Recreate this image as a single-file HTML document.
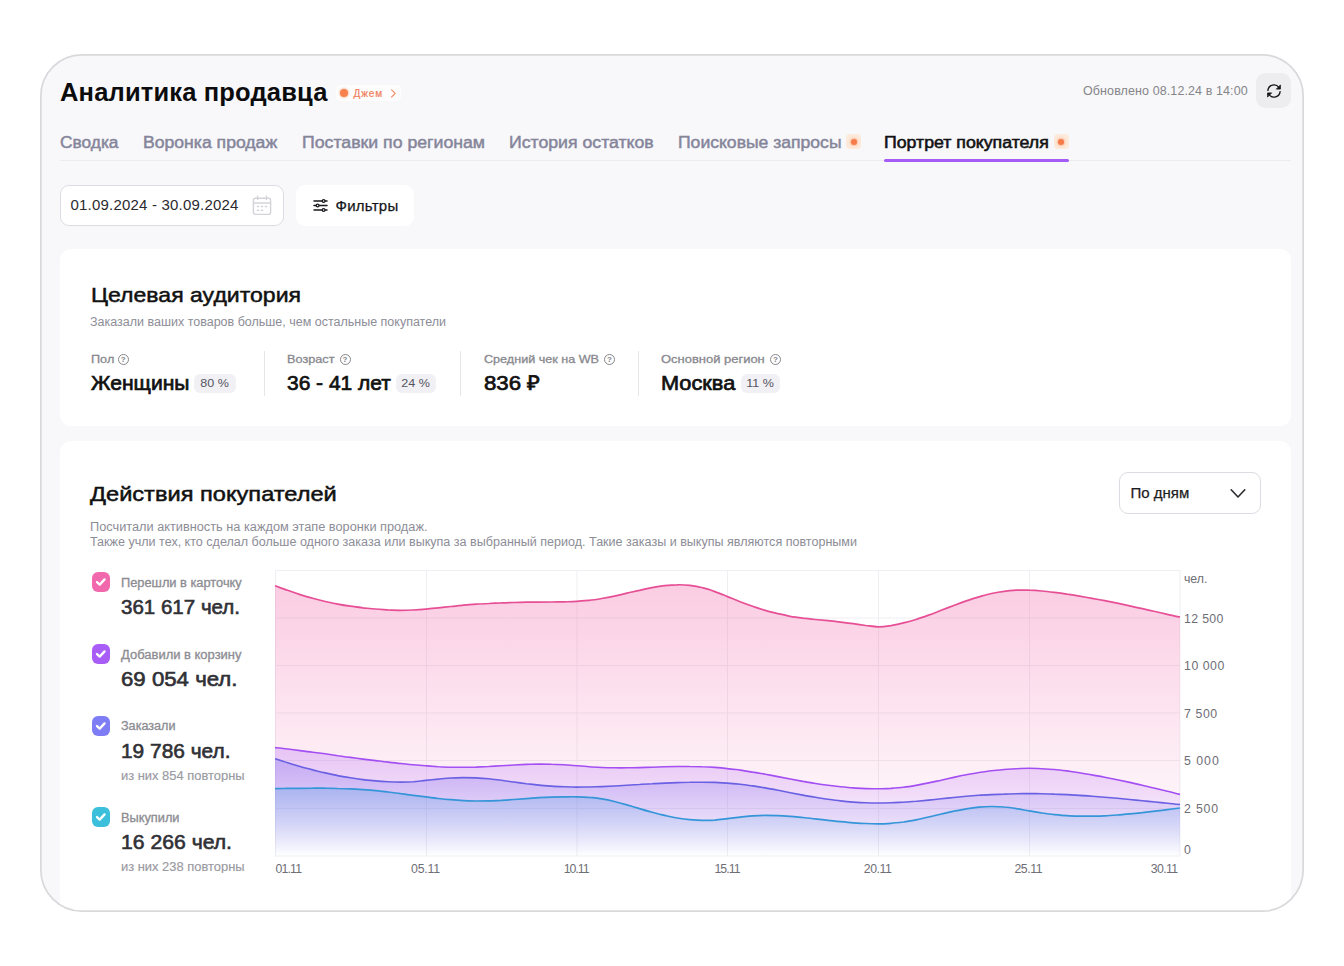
<!DOCTYPE html>
<html lang="ru">
<head>
<meta charset="utf-8">
<title>Аналитика продавца</title>
<style>
*{box-sizing:border-box;margin:0;padding:0}
html,body{width:1344px;height:966px;background:#fff;overflow:hidden}
body{font-family:"Liberation Sans",sans-serif;color:#111;position:relative}
.abs{position:absolute;white-space:nowrap;line-height:1;transform-origin:0 0}
#frame{position:absolute;left:40px;top:54px;width:1264px;height:858px;border-radius:42px;background:#f8f8fa;overflow:hidden}
/* children of #in use page coordinates */
#in{position:absolute;left:-40px;top:-54px;width:1344px;height:966px}
.title{left:60px;top:79.5px;font-size:25.5px;font-weight:700;color:#0c0c0e;letter-spacing:0.17px}
.tab{top:134.6px;font-size:16px;transform-origin:0 0;color:#85859a;-webkit-text-stroke:0.45px #85859a}
.tab.act{color:#121214;-webkit-text-stroke:0.55px #121214}
.card{position:absolute;left:59.5px;width:1231px;background:#fff;border-radius:11px}
.h2{font-size:21px;color:#111;-webkit-text-stroke:0.5px #111}
.sub{font-size:12px;color:#8d8d97}
.lbl{font-size:11.5px;transform-origin:0 0;color:#88888e;-webkit-text-stroke:0.3px #88888e}
.val{font-size:20.5px;color:#111;-webkit-text-stroke:0.7px #111}
.badge{position:absolute;height:19px;border-radius:6px;background:#f1f1f5;color:#55555f;font-size:11px;line-height:19px;text-align:center;white-space:nowrap}
.vdiv{position:absolute;width:1px;top:351px;height:45px;background:#e6e6ea}
.q{position:absolute;width:11px;height:11px;border:1px solid #86868c;border-radius:50%;color:#7e7e84;font-size:8px;font-weight:700;line-height:9px;text-align:center}
.cb{position:absolute;left:92px;width:18.4px;height:19.6px;border-radius:6px}
.cb svg{position:absolute;left:0;top:0}
.mlbl{left:120.5px;font-size:12px;color:#8c8c92;-webkit-text-stroke:0.3px #8c8c92}
.mval{left:120.5px;font-size:20px;color:#303035;-webkit-text-stroke:0.6px #303035}
.mrep{left:120.5px;font-size:12px;transform-origin:0 0;color:#9a9aa2;width:115.2px;overflow:hidden;-webkit-text-stroke:0.15px #9a9aa2}
</style>
</head>
<body>
<div id="frame"><div id="in">

<!-- header -->
<div class="abs title" id="t_title">Аналитика продавца</div>
<div class="abs" id="jam" style="left:336px;top:85px;width:65px;height:16px;border-radius:5px;background:#fdfdfd"></div>
<div class="abs" style="left:339.5px;top:89px;width:8px;height:8px;border-radius:50%;background:#f8824f;box-shadow:0 0 2px 1px rgba(250,150,100,.45)"></div>
<div class="abs" id="t_jam" style="left:353.5px;top:89px;font-size:10px;letter-spacing:0.9px;color:#f0805c;-webkit-text-stroke:0.2px #f0805c">Джем</div>
<svg class="abs" style="left:389px;top:88px" width="9" height="11" viewBox="0 0 9 11"><path d="M2.6 1.8 L6.2 5.4 L2.6 9" fill="none" stroke="#f58a5e" stroke-width="1.1" stroke-linecap="round" stroke-linejoin="round"/></svg>

<div class="abs" id="t_upd" style="left:1083px;top:85px;font-size:12.5px;letter-spacing:0.1px;color:#858589">Обновлено 08.12.24 в 14:00</div>
<div class="abs" style="left:1255.7px;top:72.8px;width:35.5px;height:35.5px;border-radius:9.5px;background:#ededef"></div>
<svg class="abs" style="left:1264.7px;top:81.7px" width="18" height="18" viewBox="0 0 18 18" fill="none" stroke="#141416" stroke-width="1.35" stroke-linecap="round" stroke-linejoin="round">
<path d="M2.9 8.4 A6.15 6.15 0 0 1 13.9 5.3"/><path d="M15.4 3.3 V7.1 H11.7 Z" fill="#141416" stroke-width="0.8"/>
<path d="M15.1 9.6 A6.15 6.15 0 0 1 4.1 12.7"/><path d="M2.6 14.7 V10.9 H6.3 Z" fill="#141416" stroke-width="0.8"/>
</svg>

<!-- tabs -->
<div class="abs tab" id="t_tab1" style="left:60px;transform:scaleX(1.0831)">Сводка</div>
<div class="abs tab" id="t_tab2" style="left:143px;transform:scaleX(1.1003)">Воронка продаж</div>
<div class="abs tab" id="t_tab3" style="left:302px;transform:scaleX(1.1054)">Поставки по регионам</div>
<div class="abs tab" id="t_tab4" style="left:509px;transform:scaleX(1.1050)">История остатков</div>
<div class="abs tab" id="t_tab5" style="left:677.5px;transform:scaleX(1.0977)">Поисковые запросы</div>
<div class="abs" style="left:846px;top:134px;width:15px;height:15px;border-radius:4px;background:#fdeadb"></div>
<div class="abs" style="left:850.5px;top:138.5px;width:6px;height:6px;border-radius:50%;background:#f8794a;box-shadow:0 0 2px 1px rgba(250,150,100,.5)"></div>
<div class="abs tab act" id="t_tab6" style="left:884px;transform:scaleX(1.1073)">Портрет покупателя</div>
<div class="abs" style="left:1053.5px;top:134px;width:15px;height:15px;border-radius:4px;background:#fdeadb"></div>
<div class="abs" style="left:1058px;top:138.5px;width:6px;height:6px;border-radius:50%;background:#f8794a;box-shadow:0 0 2px 1px rgba(250,150,100,.5)"></div>
<div class="abs" style="left:60px;top:160px;width:1231px;height:1px;background:#ececf0"></div>
<div class="abs" style="left:884px;top:159.3px;width:185px;height:2.6px;border-radius:2px;background:#a55cf6"></div>

<!-- controls -->
<div class="abs" style="left:60px;top:185px;width:224px;height:40.5px;border:1px solid #dcdce2;border-radius:9px;background:#fff"></div>
<div class="abs" id="t_date" style="left:70.5px;top:197px;font-size:15px;letter-spacing:0.2px;color:#2a2a2e">01.09.2024 - 30.09.2024</div>
<svg class="abs" style="left:252px;top:195px" width="20" height="21" viewBox="0 0 20 21" fill="none" stroke="#d3d3da" stroke-width="1.4" stroke-linecap="round" stroke-linejoin="round">
<rect x="1.4" y="3.2" width="17.2" height="16.2" rx="2"/><path d="M1.4 8 H18.6"/><path d="M5.6 1.2 V4.6 M14.4 1.2 V4.6"/>
<path d="M5.4 11.6h1.2M9.4 11.6h1.2M13.4 11.6h1.2M5.4 15.2h1.2M9.4 15.2h1.2" stroke-width="1.5"/>
</svg>
<div class="abs" style="left:296px;top:185px;width:118px;height:40.5px;border-radius:9px;background:#fff"></div>
<svg class="abs" style="left:312px;top:197px" width="17" height="17" viewBox="0 0 17 17" fill="none" stroke="#1a1a1e" stroke-width="1.5" stroke-linecap="round">
<path d="M2 4 H15 M2 8.5 H15 M2 13 H15"/>
<circle cx="11.6" cy="4" r="1.4" fill="#fff" stroke-width="1.3"/><circle cx="5.6" cy="8.5" r="1.4" fill="#fff" stroke-width="1.3"/><circle cx="11.6" cy="13" r="1.4" fill="#fff" stroke-width="1.3"/>
</svg>
<div class="abs" id="t_filt" style="left:335.5px;top:198px;font-size:15px;letter-spacing:0.25px;color:#151518;-webkit-text-stroke:0.25px #151518">Фильтры</div>

<!-- cards -->
<div class="card" id="card1" style="top:248.8px;height:177px"></div>
<div class="abs h2" id="t_h1" style="left:90.5px;top:284.25px;transform:scaleX(1.0976)">Целевая аудитория</div>
<div class="abs sub" id="t_s1" style="left:90px;top:315.5px;transform:scaleX(1.0415)">Заказали ваших товаров больше, чем остальные покупатели</div>

<div class="abs lbl" id="t_l1" style="left:90.5px;top:353.6px;transform:scaleX(1.1026)">Пол</div>
<div class="abs lbl" id="t_l2" style="left:287px;top:353.6px;transform:scaleX(1.1041)">Возраст</div>
<div class="abs lbl" id="t_l3" style="left:483.5px;top:353.6px;transform:scaleX(1.0950)">Средний чек на WB</div>
<div class="abs lbl" id="t_l4" style="left:661px;top:353.6px;transform:scaleX(1.1268)">Основной регион</div>
<div class="q" style="left:117.6px;top:353.8px">?</div>
<div class="q" style="left:339.5px;top:353.8px">?</div>
<div class="q" style="left:604px;top:353.8px">?</div>
<div class="q" style="left:770px;top:353.8px">?</div>

<div class="abs val" id="t_v1" style="left:90.5px;top:373px;transform:scaleX(1.0284)">Женщины</div>
<div class="abs val" id="t_v2" style="left:287px;top:373px;transform:scaleX(1.0213)">36 - 41 лет</div>
<div class="abs val" id="t_v3" style="left:483.5px;top:373px;transform:scaleX(1.0836)">836 ₽</div>
<div class="abs val" id="t_v4" style="left:661px;top:373px;transform:scaleX(1.0607)">Москва</div>
<div class="badge" style="left:193.5px;top:373.5px;width:42.5px"><span id="t_b1" style="display:inline-block;transform:scaleX(1.14)">80 %</span></div>
<div class="badge" style="left:396px;top:373.5px;width:40px"><span id="t_b2" style="display:inline-block;transform:scaleX(1.14)">24 %</span></div>
<div class="badge" style="left:741px;top:373.5px;width:38.5px"><span id="t_b3" style="display:inline-block;transform:scaleX(1.14)">11 %</span></div>
<div class="vdiv" style="left:263.5px"></div>
<div class="vdiv" style="left:460px"></div>
<div class="vdiv" style="left:637.5px"></div>

<div class="card" id="card2" style="top:441.4px;height:520px"></div>
<div class="abs h2" id="t_h2" style="left:90px;top:482.5px;transform:scaleX(1.1245)">Действия покупателей</div>
<div class="abs sub" id="t_s2" style="left:90px;top:520.6px;transform:scaleX(1.0629)">Посчитали активность на каждом этапе воронки продаж.</div>
<div class="abs sub" id="t_s3" style="left:90px;top:535.6px;transform:scaleX(1.0458)">Также учли тех, кто сделал больше одного заказа или выкупа за выбранный период. Такие заказы и выкупы являются повторными</div>

<div class="abs" style="left:1118.5px;top:472px;width:142px;height:42px;border:1px solid #dcdce2;border-radius:9px;background:#fff"></div>
<div class="abs" id="t_dd" style="left:1130.5px;top:484.5px;font-size:15px;color:#1d1d21;-webkit-text-stroke:0.25px #1d1d21">По дням</div>
<svg class="abs" style="left:1229px;top:487px" width="18" height="13" viewBox="0 0 18 13"><path d="M2.2 2.8 L9 10 L15.8 2.8" fill="none" stroke="#2a2a2e" stroke-width="1.6" stroke-linecap="round" stroke-linejoin="round"/></svg>

<!-- metrics -->
<div class="cb" style="top:572px;background:#f168ad"><svg width="18.4" height="19.2" viewBox="0 0 18.4 19.2"><path d="M5 10.1 L7.7 12.6 L12.6 7.4" fill="none" stroke="#fff" stroke-width="2.3" stroke-linecap="round" stroke-linejoin="round"/></svg></div>
<div class="abs mlbl" id="t_m1" style="top:576.5px;transform:scaleX(1.0683)">Перешли в карточку</div>
<div class="abs mval" id="t_n1" style="top:596.6px;transform:scaleX(1.0261)">361 617 чел.</div>

<div class="cb" style="top:644px;background:#a85df6"><svg width="18.4" height="19.2" viewBox="0 0 18.4 19.2"><path d="M5 10.1 L7.7 12.6 L12.6 7.4" fill="none" stroke="#fff" stroke-width="2.3" stroke-linecap="round" stroke-linejoin="round"/></svg></div>
<div class="abs mlbl" id="t_m2" style="top:648.5px;transform:scaleX(1.0810)">Добавили в корзину</div>
<div class="abs mval" id="t_n2" style="top:668.6px;transform:scaleX(1.1112)">69 054 чел.</div>

<div class="cb" style="top:716px;background:#7f7df6"><svg width="18.4" height="19.2" viewBox="0 0 18.4 19.2"><path d="M5 10.1 L7.7 12.6 L12.6 7.4" fill="none" stroke="#fff" stroke-width="2.3" stroke-linecap="round" stroke-linejoin="round"/></svg></div>
<div class="abs mlbl" id="t_m3" style="top:720.3px;transform:scaleX(1.0509)">Заказали</div>
<div class="abs mval" id="t_n3" style="top:740.5px;transform:scaleX(1.0444)">19 786 чел.</div>
<div class="abs mrep" id="t_r3" style="top:769.8px;transform:scaleX(1.0761)">из них 854 повторных</div>

<div class="cb" style="top:807px;background:#3bbfdb"><svg width="18.4" height="19.2" viewBox="0 0 18.4 19.2"><path d="M5 10.1 L7.7 12.6 L12.6 7.4" fill="none" stroke="#fff" stroke-width="2.3" stroke-linecap="round" stroke-linejoin="round"/></svg></div>
<div class="abs mlbl" id="t_m4" style="top:811.5px;transform:scaleX(1.0652)">Выкупили</div>
<div class="abs mval" id="t_n4" style="top:831.5px;transform:scaleX(1.0588)">16 266 чел.</div>
<div class="abs mrep" id="t_r4" style="top:860.8px;transform:scaleX(1.0761)">из них 238 повторных</div>

<!-- chart -->
<svg class="abs" id="chart" style="left:270px;top:560px" width="980" height="330" viewBox="270 560 980 330"><defs>
<linearGradient id="gp" gradientUnits="userSpaceOnUse" x1="0" y1="584" x2="0" y2="856.3"><stop offset="0" stop-color="#f0569f" stop-opacity="0.3"/><stop offset="1" stop-color="#f0569f" stop-opacity="0"/></linearGradient>
<linearGradient id="gu" gradientUnits="userSpaceOnUse" x1="0" y1="747" x2="0" y2="856.3"><stop offset="0" stop-color="#a855f7" stop-opacity="0.26"/><stop offset="1" stop-color="#a855f7" stop-opacity="0"/></linearGradient>
<linearGradient id="gi" gradientUnits="userSpaceOnUse" x1="0" y1="758" x2="0" y2="856.3"><stop offset="0" stop-color="#6f62ee" stop-opacity="0.3"/><stop offset="1" stop-color="#6f62ee" stop-opacity="0"/></linearGradient>
<linearGradient id="gb" gradientUnits="userSpaceOnUse" x1="0" y1="788" x2="0" y2="856.3"><stop offset="0" stop-color="#4698e4" stop-opacity="0.29"/><stop offset="1" stop-color="#4698e4" stop-opacity="0"/></linearGradient>
</defs>
<path d="M275.5 570.5V856.3M426.5 570.5V856.3M577 570.5V856.3M727.5 570.5V856.3M878.5 570.5V856.3M1029.5 570.5V856.3M1180 570.5V856.3M275 570.5H1180M275 618H1180M275 665.5H1180M275 713H1180M275 760.5H1180M275 808.5H1180M275 856H1180" stroke="#efeff3" stroke-width="1" fill="none"/>
<path d="M275.0 585.8C277.1 586.5 283.4 588.9 287.6 590.3C291.8 591.8 295.9 593.2 300.1 594.6C304.3 595.9 308.5 597.2 312.7 598.3C316.9 599.5 321.1 600.6 325.3 601.5C329.5 602.5 333.7 603.3 337.8 604.1C342.0 604.9 346.2 605.6 350.4 606.2C354.6 606.8 358.8 607.3 363.0 607.8C367.2 608.2 371.4 608.7 375.6 609.0C379.7 609.4 383.9 609.6 388.1 609.9C392.3 610.1 396.5 610.3 400.7 610.3C404.9 610.3 409.1 610.2 413.3 610.0C417.5 609.8 421.6 609.5 425.8 609.1C430.0 608.7 434.2 608.2 438.4 607.8C442.6 607.4 446.8 606.9 451.0 606.5C455.2 606.0 459.4 605.6 463.5 605.2C467.7 604.9 471.9 604.5 476.1 604.2C480.3 603.9 484.5 603.7 488.7 603.5C492.9 603.2 497.1 603.0 501.3 602.9C505.4 602.7 509.6 602.6 513.8 602.5C518.0 602.4 522.2 602.3 526.4 602.2C530.6 602.2 534.8 602.1 539.0 602.1C543.1 602.0 547.3 602.0 551.5 602.0C555.7 601.9 559.9 601.9 564.1 601.8C568.3 601.7 572.5 601.7 576.7 601.4C580.9 601.2 585.0 600.8 589.2 600.4C593.4 599.9 597.6 599.2 601.8 598.5C606.0 597.8 610.2 597.0 614.4 596.1C618.6 595.2 622.8 594.2 626.9 593.2C631.1 592.3 635.3 591.2 639.5 590.3C643.7 589.3 647.9 588.4 652.1 587.6C656.3 586.9 660.5 586.2 664.7 585.7C668.8 585.2 673.0 584.8 677.2 584.8C681.4 584.7 685.6 584.9 689.8 585.4C694.0 585.9 698.2 586.6 702.4 587.7C706.6 588.7 710.7 590.1 714.9 591.6C719.1 593.1 723.3 594.9 727.5 596.6C731.7 598.3 735.9 600.1 740.1 601.7C744.3 603.3 748.4 604.8 752.6 606.3C756.8 607.7 761.0 609.2 765.2 610.4C769.4 611.7 773.6 612.7 777.8 613.7C782.0 614.6 786.2 615.5 790.3 616.3C794.5 617.0 798.7 617.6 802.9 618.2C807.1 618.7 811.3 619.1 815.5 619.5C819.7 619.9 823.9 620.3 828.1 620.7C832.2 621.1 836.4 621.6 840.6 622.1C844.8 622.6 849.0 623.1 853.2 623.7C857.4 624.3 861.6 624.9 865.8 625.5C870.0 626.0 874.1 626.8 878.3 626.8C882.5 626.9 886.7 626.2 890.9 625.6C895.1 624.9 899.3 624.0 903.5 622.9C907.7 621.9 911.9 620.8 916.0 619.5C920.2 618.1 924.4 616.6 928.6 615.1C932.8 613.6 937.0 611.9 941.2 610.3C945.4 608.7 949.6 607.1 953.8 605.5C957.9 603.9 962.1 602.3 966.3 600.9C970.5 599.5 974.7 598.1 978.9 596.9C983.1 595.7 987.3 594.4 991.5 593.5C995.6 592.6 999.8 591.8 1004.0 591.3C1008.2 590.7 1012.4 590.4 1016.6 590.2C1020.8 590.0 1025.0 590.0 1029.2 590.2C1033.4 590.3 1037.5 590.6 1041.7 591.0C1045.9 591.4 1050.1 591.9 1054.3 592.4C1058.5 592.9 1062.7 593.5 1066.9 594.2C1071.1 594.8 1075.3 595.5 1079.4 596.2C1083.6 596.9 1087.8 597.6 1092.0 598.3C1096.2 599.1 1100.4 599.9 1104.6 600.7C1108.8 601.5 1113.0 602.4 1117.2 603.2C1121.3 604.1 1125.5 605.0 1129.7 605.9C1133.9 606.8 1138.1 607.8 1142.3 608.7C1146.5 609.6 1150.7 610.6 1154.9 611.5C1159.1 612.5 1163.2 613.4 1167.4 614.3C1171.6 615.2 1177.9 616.6 1180.0 617.0L1180 856.3L275 856.3Z" fill="url(#gp)"/>
<path d="M275.0 585.8C277.1 586.5 283.4 588.9 287.6 590.3C291.8 591.8 295.9 593.2 300.1 594.6C304.3 595.9 308.5 597.2 312.7 598.3C316.9 599.5 321.1 600.6 325.3 601.5C329.5 602.5 333.7 603.3 337.8 604.1C342.0 604.9 346.2 605.6 350.4 606.2C354.6 606.8 358.8 607.3 363.0 607.8C367.2 608.2 371.4 608.7 375.6 609.0C379.7 609.4 383.9 609.6 388.1 609.9C392.3 610.1 396.5 610.3 400.7 610.3C404.9 610.3 409.1 610.2 413.3 610.0C417.5 609.8 421.6 609.5 425.8 609.1C430.0 608.7 434.2 608.2 438.4 607.8C442.6 607.4 446.8 606.9 451.0 606.5C455.2 606.0 459.4 605.6 463.5 605.2C467.7 604.9 471.9 604.5 476.1 604.2C480.3 603.9 484.5 603.7 488.7 603.5C492.9 603.2 497.1 603.0 501.3 602.9C505.4 602.7 509.6 602.6 513.8 602.5C518.0 602.4 522.2 602.3 526.4 602.2C530.6 602.2 534.8 602.1 539.0 602.1C543.1 602.0 547.3 602.0 551.5 602.0C555.7 601.9 559.9 601.9 564.1 601.8C568.3 601.7 572.5 601.7 576.7 601.4C580.9 601.2 585.0 600.8 589.2 600.4C593.4 599.9 597.6 599.2 601.8 598.5C606.0 597.8 610.2 597.0 614.4 596.1C618.6 595.2 622.8 594.2 626.9 593.2C631.1 592.3 635.3 591.2 639.5 590.3C643.7 589.3 647.9 588.4 652.1 587.6C656.3 586.9 660.5 586.2 664.7 585.7C668.8 585.2 673.0 584.8 677.2 584.8C681.4 584.7 685.6 584.9 689.8 585.4C694.0 585.9 698.2 586.6 702.4 587.7C706.6 588.7 710.7 590.1 714.9 591.6C719.1 593.1 723.3 594.9 727.5 596.6C731.7 598.3 735.9 600.1 740.1 601.7C744.3 603.3 748.4 604.8 752.6 606.3C756.8 607.7 761.0 609.2 765.2 610.4C769.4 611.7 773.6 612.7 777.8 613.7C782.0 614.6 786.2 615.5 790.3 616.3C794.5 617.0 798.7 617.6 802.9 618.2C807.1 618.7 811.3 619.1 815.5 619.5C819.7 619.9 823.9 620.3 828.1 620.7C832.2 621.1 836.4 621.6 840.6 622.1C844.8 622.6 849.0 623.1 853.2 623.7C857.4 624.3 861.6 624.9 865.8 625.5C870.0 626.0 874.1 626.8 878.3 626.8C882.5 626.9 886.7 626.2 890.9 625.6C895.1 624.9 899.3 624.0 903.5 622.9C907.7 621.9 911.9 620.8 916.0 619.5C920.2 618.1 924.4 616.6 928.6 615.1C932.8 613.6 937.0 611.9 941.2 610.3C945.4 608.7 949.6 607.1 953.8 605.5C957.9 603.9 962.1 602.3 966.3 600.9C970.5 599.5 974.7 598.1 978.9 596.9C983.1 595.7 987.3 594.4 991.5 593.5C995.6 592.6 999.8 591.8 1004.0 591.3C1008.2 590.7 1012.4 590.4 1016.6 590.2C1020.8 590.0 1025.0 590.0 1029.2 590.2C1033.4 590.3 1037.5 590.6 1041.7 591.0C1045.9 591.4 1050.1 591.9 1054.3 592.4C1058.5 592.9 1062.7 593.5 1066.9 594.2C1071.1 594.8 1075.3 595.5 1079.4 596.2C1083.6 596.9 1087.8 597.6 1092.0 598.3C1096.2 599.1 1100.4 599.9 1104.6 600.7C1108.8 601.5 1113.0 602.4 1117.2 603.2C1121.3 604.1 1125.5 605.0 1129.7 605.9C1133.9 606.8 1138.1 607.8 1142.3 608.7C1146.5 609.6 1150.7 610.6 1154.9 611.5C1159.1 612.5 1163.2 613.4 1167.4 614.3C1171.6 615.2 1177.9 616.6 1180.0 617.0" fill="none" stroke="#e64f95" stroke-width="1.7" stroke-linejoin="round"/>
<path d="M275.0 747.5C277.1 747.8 283.4 748.5 287.6 749.0C291.8 749.5 295.9 750.1 300.1 750.6C304.3 751.1 308.5 751.6 312.7 752.2C316.9 752.7 321.1 753.3 325.3 753.8C329.5 754.4 333.7 755.1 337.8 755.7C342.0 756.2 346.2 756.8 350.4 757.4C354.6 758.0 358.8 758.5 363.0 759.1C367.2 759.6 371.4 760.1 375.6 760.6C379.7 761.1 383.9 761.7 388.1 762.1C392.3 762.6 396.5 763.1 400.7 763.5C404.9 764.0 409.1 764.4 413.3 764.8C417.5 765.1 421.6 765.5 425.8 765.8C430.0 766.1 434.2 766.4 438.4 766.7C442.6 766.9 446.8 767.1 451.0 767.2C455.2 767.3 459.4 767.3 463.5 767.3C467.7 767.3 471.9 767.2 476.1 767.1C480.3 766.9 484.5 766.7 488.7 766.5C492.9 766.3 497.1 766.0 501.3 765.8C505.4 765.5 509.6 765.2 513.8 765.0C518.0 764.8 522.2 764.6 526.4 764.4C530.6 764.3 534.8 764.1 539.0 764.1C543.1 764.1 547.3 764.1 551.5 764.3C555.7 764.4 559.9 764.6 564.1 764.8C568.3 765.1 572.5 765.4 576.7 765.7C580.9 766.1 585.0 766.5 589.2 766.8C593.4 767.1 597.6 767.3 601.8 767.5C606.0 767.7 610.2 767.8 614.4 767.8C618.6 767.9 622.8 767.9 626.9 767.8C631.1 767.8 635.3 767.7 639.5 767.6C643.7 767.5 647.9 767.3 652.1 767.2C656.3 767.1 660.5 766.9 664.7 766.8C668.8 766.7 673.0 766.6 677.2 766.5C681.4 766.5 685.6 766.4 689.8 766.5C694.0 766.5 698.2 766.6 702.4 766.8C706.6 766.9 710.7 767.1 714.9 767.4C719.1 767.7 723.3 768.1 727.5 768.6C731.7 769.0 735.9 769.6 740.1 770.1C744.3 770.7 748.4 771.4 752.6 772.1C756.8 772.7 761.0 773.5 765.2 774.2C769.4 775.0 773.6 775.8 777.8 776.6C782.0 777.4 786.2 778.2 790.3 779.0C794.5 779.8 798.7 780.6 802.9 781.4C807.1 782.1 811.3 782.9 815.5 783.5C819.7 784.2 823.9 784.8 828.1 785.3C832.2 785.9 836.4 786.4 840.6 786.8C844.8 787.2 849.0 787.6 853.2 787.9C857.4 788.2 861.6 788.4 865.8 788.6C870.0 788.7 874.1 788.8 878.3 788.8C882.5 788.8 886.7 788.6 890.9 788.4C895.1 788.1 899.3 787.8 903.5 787.3C907.7 786.8 911.9 786.1 916.0 785.4C920.2 784.6 924.4 783.8 928.6 782.9C932.8 782.1 937.0 781.1 941.2 780.2C945.4 779.3 949.6 778.3 953.8 777.4C957.9 776.5 962.1 775.6 966.3 774.8C970.5 774.0 974.7 773.2 978.9 772.5C983.1 771.9 987.3 771.3 991.5 770.8C995.6 770.3 999.8 769.9 1004.0 769.5C1008.2 769.2 1012.4 768.9 1016.6 768.7C1020.8 768.5 1025.0 768.3 1029.2 768.3C1033.4 768.3 1037.5 768.5 1041.7 768.7C1045.9 768.9 1050.1 769.1 1054.3 769.5C1058.5 769.9 1062.7 770.4 1066.9 770.9C1071.1 771.5 1075.3 772.0 1079.4 772.7C1083.6 773.4 1087.8 774.1 1092.0 774.9C1096.2 775.6 1100.4 776.4 1104.6 777.2C1108.8 778.0 1113.0 778.9 1117.2 779.7C1121.3 780.6 1125.5 781.5 1129.7 782.4C1133.9 783.3 1138.1 784.3 1142.3 785.3C1146.5 786.3 1150.7 787.2 1154.9 788.3C1159.1 789.3 1163.2 790.3 1167.4 791.3C1171.6 792.4 1177.9 793.9 1180.0 794.4L1180 856.3L275 856.3Z" fill="url(#gu)"/>
<path d="M275.0 747.5C277.1 747.8 283.4 748.5 287.6 749.0C291.8 749.5 295.9 750.1 300.1 750.6C304.3 751.1 308.5 751.6 312.7 752.2C316.9 752.7 321.1 753.3 325.3 753.8C329.5 754.4 333.7 755.1 337.8 755.7C342.0 756.2 346.2 756.8 350.4 757.4C354.6 758.0 358.8 758.5 363.0 759.1C367.2 759.6 371.4 760.1 375.6 760.6C379.7 761.1 383.9 761.7 388.1 762.1C392.3 762.6 396.5 763.1 400.7 763.5C404.9 764.0 409.1 764.4 413.3 764.8C417.5 765.1 421.6 765.5 425.8 765.8C430.0 766.1 434.2 766.4 438.4 766.7C442.6 766.9 446.8 767.1 451.0 767.2C455.2 767.3 459.4 767.3 463.5 767.3C467.7 767.3 471.9 767.2 476.1 767.1C480.3 766.9 484.5 766.7 488.7 766.5C492.9 766.3 497.1 766.0 501.3 765.8C505.4 765.5 509.6 765.2 513.8 765.0C518.0 764.8 522.2 764.6 526.4 764.4C530.6 764.3 534.8 764.1 539.0 764.1C543.1 764.1 547.3 764.1 551.5 764.3C555.7 764.4 559.9 764.6 564.1 764.8C568.3 765.1 572.5 765.4 576.7 765.7C580.9 766.1 585.0 766.5 589.2 766.8C593.4 767.1 597.6 767.3 601.8 767.5C606.0 767.7 610.2 767.8 614.4 767.8C618.6 767.9 622.8 767.9 626.9 767.8C631.1 767.8 635.3 767.7 639.5 767.6C643.7 767.5 647.9 767.3 652.1 767.2C656.3 767.1 660.5 766.9 664.7 766.8C668.8 766.7 673.0 766.6 677.2 766.5C681.4 766.5 685.6 766.4 689.8 766.5C694.0 766.5 698.2 766.6 702.4 766.8C706.6 766.9 710.7 767.1 714.9 767.4C719.1 767.7 723.3 768.1 727.5 768.6C731.7 769.0 735.9 769.6 740.1 770.1C744.3 770.7 748.4 771.4 752.6 772.1C756.8 772.7 761.0 773.5 765.2 774.2C769.4 775.0 773.6 775.8 777.8 776.6C782.0 777.4 786.2 778.2 790.3 779.0C794.5 779.8 798.7 780.6 802.9 781.4C807.1 782.1 811.3 782.9 815.5 783.5C819.7 784.2 823.9 784.8 828.1 785.3C832.2 785.9 836.4 786.4 840.6 786.8C844.8 787.2 849.0 787.6 853.2 787.9C857.4 788.2 861.6 788.4 865.8 788.6C870.0 788.7 874.1 788.8 878.3 788.8C882.5 788.8 886.7 788.6 890.9 788.4C895.1 788.1 899.3 787.8 903.5 787.3C907.7 786.8 911.9 786.1 916.0 785.4C920.2 784.6 924.4 783.8 928.6 782.9C932.8 782.1 937.0 781.1 941.2 780.2C945.4 779.3 949.6 778.3 953.8 777.4C957.9 776.5 962.1 775.6 966.3 774.8C970.5 774.0 974.7 773.2 978.9 772.5C983.1 771.9 987.3 771.3 991.5 770.8C995.6 770.3 999.8 769.9 1004.0 769.5C1008.2 769.2 1012.4 768.9 1016.6 768.7C1020.8 768.5 1025.0 768.3 1029.2 768.3C1033.4 768.3 1037.5 768.5 1041.7 768.7C1045.9 768.9 1050.1 769.1 1054.3 769.5C1058.5 769.9 1062.7 770.4 1066.9 770.9C1071.1 771.5 1075.3 772.0 1079.4 772.7C1083.6 773.4 1087.8 774.1 1092.0 774.9C1096.2 775.6 1100.4 776.4 1104.6 777.2C1108.8 778.0 1113.0 778.9 1117.2 779.7C1121.3 780.6 1125.5 781.5 1129.7 782.4C1133.9 783.3 1138.1 784.3 1142.3 785.3C1146.5 786.3 1150.7 787.2 1154.9 788.3C1159.1 789.3 1163.2 790.3 1167.4 791.3C1171.6 792.4 1177.9 793.9 1180.0 794.4" fill="none" stroke="#a44ff3" stroke-width="1.6" stroke-linejoin="round"/>
<path d="M275.0 758.8C277.1 759.4 283.4 761.4 287.6 762.7C291.8 764.0 295.9 765.3 300.1 766.5C304.3 767.7 308.5 768.8 312.7 769.9C316.9 770.9 321.1 772.0 325.3 772.9C329.5 773.9 333.7 774.7 337.8 775.6C342.0 776.4 346.2 777.1 350.4 777.8C354.6 778.5 358.8 779.1 363.0 779.6C367.2 780.1 371.4 780.6 375.6 780.9C379.7 781.3 383.9 781.6 388.1 781.8C392.3 782.0 396.5 782.1 400.7 782.1C404.9 782.0 409.1 781.9 413.3 781.7C417.5 781.4 421.6 780.8 425.8 780.4C430.0 780.0 434.2 779.5 438.4 779.1C442.6 778.7 446.8 778.2 451.0 778.0C455.2 777.8 459.4 777.7 463.5 777.6C467.7 777.6 471.9 777.7 476.1 777.9C480.3 778.1 484.5 778.4 488.7 778.8C492.9 779.2 497.1 779.8 501.3 780.3C505.4 780.9 509.6 781.5 513.8 782.0C518.0 782.6 522.2 783.1 526.4 783.7C530.6 784.2 534.8 784.6 539.0 785.1C543.1 785.5 547.3 785.8 551.5 786.1C555.7 786.4 559.9 786.6 564.1 786.8C568.3 787.0 572.5 787.0 576.7 787.1C580.9 787.1 585.0 787.0 589.2 787.0C593.4 786.9 597.6 786.7 601.8 786.6C606.0 786.4 610.2 786.2 614.4 786.0C618.6 785.8 622.8 785.5 626.9 785.3C631.1 785.0 635.3 784.7 639.5 784.5C643.7 784.2 647.9 784.0 652.1 783.8C656.3 783.5 660.5 783.3 664.7 783.1C668.8 782.9 673.0 782.7 677.2 782.6C681.4 782.5 685.6 782.3 689.8 782.3C694.0 782.2 698.2 782.2 702.4 782.2C706.6 782.2 710.7 782.2 714.9 782.4C719.1 782.6 723.3 782.8 727.5 783.1C731.7 783.4 735.9 783.8 740.1 784.2C744.3 784.7 748.4 785.3 752.6 785.9C756.8 786.5 761.0 787.2 765.2 787.9C769.4 788.6 773.6 789.4 777.8 790.2C782.0 791.0 786.2 791.9 790.3 792.7C794.5 793.5 798.7 794.3 802.9 795.1C807.1 795.9 811.3 796.6 815.5 797.3C819.7 798.0 823.9 798.7 828.1 799.3C832.2 799.9 836.4 800.5 840.6 800.9C844.8 801.4 849.0 801.8 853.2 802.1C857.4 802.4 861.6 802.7 865.8 802.8C870.0 803.0 874.1 803.0 878.3 803.0C882.5 803.0 886.7 802.9 890.9 802.8C895.1 802.7 899.3 802.4 903.5 802.2C907.7 801.9 911.9 801.6 916.0 801.3C920.2 800.9 924.4 800.5 928.6 800.1C932.8 799.7 937.0 799.2 941.2 798.8C945.4 798.4 949.6 797.9 953.8 797.5C957.9 797.1 962.1 796.7 966.3 796.3C970.5 796.0 974.7 795.6 978.9 795.3C983.1 795.0 987.3 794.8 991.5 794.6C995.6 794.4 999.8 794.2 1004.0 794.1C1008.2 793.9 1012.4 793.8 1016.6 793.7C1020.8 793.7 1025.0 793.6 1029.2 793.6C1033.4 793.6 1037.5 793.7 1041.7 793.7C1045.9 793.8 1050.1 793.9 1054.3 794.1C1058.5 794.2 1062.7 794.4 1066.9 794.6C1071.1 794.9 1075.3 795.1 1079.4 795.4C1083.6 795.6 1087.8 795.9 1092.0 796.2C1096.2 796.5 1100.4 796.9 1104.6 797.2C1108.8 797.6 1113.0 797.9 1117.2 798.3C1121.3 798.7 1125.5 799.1 1129.7 799.5C1133.9 799.9 1138.1 800.3 1142.3 800.7C1146.5 801.1 1150.7 801.6 1154.9 802.0C1159.1 802.4 1163.2 802.8 1167.4 803.2C1171.6 803.7 1177.9 804.3 1180.0 804.5L1180 856.3L275 856.3Z" fill="url(#gi)"/>
<path d="M275.0 758.8C277.1 759.4 283.4 761.4 287.6 762.7C291.8 764.0 295.9 765.3 300.1 766.5C304.3 767.7 308.5 768.8 312.7 769.9C316.9 770.9 321.1 772.0 325.3 772.9C329.5 773.9 333.7 774.7 337.8 775.6C342.0 776.4 346.2 777.1 350.4 777.8C354.6 778.5 358.8 779.1 363.0 779.6C367.2 780.1 371.4 780.6 375.6 780.9C379.7 781.3 383.9 781.6 388.1 781.8C392.3 782.0 396.5 782.1 400.7 782.1C404.9 782.0 409.1 781.9 413.3 781.7C417.5 781.4 421.6 780.8 425.8 780.4C430.0 780.0 434.2 779.5 438.4 779.1C442.6 778.7 446.8 778.2 451.0 778.0C455.2 777.8 459.4 777.7 463.5 777.6C467.7 777.6 471.9 777.7 476.1 777.9C480.3 778.1 484.5 778.4 488.7 778.8C492.9 779.2 497.1 779.8 501.3 780.3C505.4 780.9 509.6 781.5 513.8 782.0C518.0 782.6 522.2 783.1 526.4 783.7C530.6 784.2 534.8 784.6 539.0 785.1C543.1 785.5 547.3 785.8 551.5 786.1C555.7 786.4 559.9 786.6 564.1 786.8C568.3 787.0 572.5 787.0 576.7 787.1C580.9 787.1 585.0 787.0 589.2 787.0C593.4 786.9 597.6 786.7 601.8 786.6C606.0 786.4 610.2 786.2 614.4 786.0C618.6 785.8 622.8 785.5 626.9 785.3C631.1 785.0 635.3 784.7 639.5 784.5C643.7 784.2 647.9 784.0 652.1 783.8C656.3 783.5 660.5 783.3 664.7 783.1C668.8 782.9 673.0 782.7 677.2 782.6C681.4 782.5 685.6 782.3 689.8 782.3C694.0 782.2 698.2 782.2 702.4 782.2C706.6 782.2 710.7 782.2 714.9 782.4C719.1 782.6 723.3 782.8 727.5 783.1C731.7 783.4 735.9 783.8 740.1 784.2C744.3 784.7 748.4 785.3 752.6 785.9C756.8 786.5 761.0 787.2 765.2 787.9C769.4 788.6 773.6 789.4 777.8 790.2C782.0 791.0 786.2 791.9 790.3 792.7C794.5 793.5 798.7 794.3 802.9 795.1C807.1 795.9 811.3 796.6 815.5 797.3C819.7 798.0 823.9 798.7 828.1 799.3C832.2 799.9 836.4 800.5 840.6 800.9C844.8 801.4 849.0 801.8 853.2 802.1C857.4 802.4 861.6 802.7 865.8 802.8C870.0 803.0 874.1 803.0 878.3 803.0C882.5 803.0 886.7 802.9 890.9 802.8C895.1 802.7 899.3 802.4 903.5 802.2C907.7 801.9 911.9 801.6 916.0 801.3C920.2 800.9 924.4 800.5 928.6 800.1C932.8 799.7 937.0 799.2 941.2 798.8C945.4 798.4 949.6 797.9 953.8 797.5C957.9 797.1 962.1 796.7 966.3 796.3C970.5 796.0 974.7 795.6 978.9 795.3C983.1 795.0 987.3 794.8 991.5 794.6C995.6 794.4 999.8 794.2 1004.0 794.1C1008.2 793.9 1012.4 793.8 1016.6 793.7C1020.8 793.7 1025.0 793.6 1029.2 793.6C1033.4 793.6 1037.5 793.7 1041.7 793.7C1045.9 793.8 1050.1 793.9 1054.3 794.1C1058.5 794.2 1062.7 794.4 1066.9 794.6C1071.1 794.9 1075.3 795.1 1079.4 795.4C1083.6 795.6 1087.8 795.9 1092.0 796.2C1096.2 796.5 1100.4 796.9 1104.6 797.2C1108.8 797.6 1113.0 797.9 1117.2 798.3C1121.3 798.7 1125.5 799.1 1129.7 799.5C1133.9 799.9 1138.1 800.3 1142.3 800.7C1146.5 801.1 1150.7 801.6 1154.9 802.0C1159.1 802.4 1163.2 802.8 1167.4 803.2C1171.6 803.7 1177.9 804.3 1180.0 804.5" fill="none" stroke="#6a60e4" stroke-width="1.6" stroke-linejoin="round"/>
<path d="M275.0 788.6C277.1 788.6 283.4 788.5 287.6 788.4C291.8 788.4 295.9 788.3 300.1 788.3C304.3 788.2 308.5 788.2 312.7 788.2C316.9 788.1 321.1 788.1 325.3 788.2C329.5 788.2 333.7 788.3 337.8 788.5C342.0 788.6 346.2 788.7 350.4 788.9C354.6 789.1 358.8 789.4 363.0 789.7C367.2 790.0 371.4 790.3 375.6 790.7C379.7 791.1 383.9 791.6 388.1 792.0C392.3 792.5 396.5 793.0 400.7 793.6C404.9 794.1 409.1 794.7 413.3 795.3C417.5 795.8 421.6 796.4 425.8 796.9C430.0 797.5 434.2 798.0 438.4 798.5C442.6 799.0 446.8 799.4 451.0 799.7C455.2 800.1 459.4 800.4 463.5 800.6C467.7 800.8 471.9 800.9 476.1 801.0C480.3 801.0 484.5 801.0 488.7 800.9C492.9 800.8 497.1 800.6 501.3 800.4C505.4 800.1 509.6 799.8 513.8 799.5C518.0 799.2 522.2 798.9 526.4 798.6C530.6 798.3 534.8 798.0 539.0 797.7C543.1 797.5 547.3 797.3 551.5 797.1C555.7 797.0 559.9 796.9 564.1 796.8C568.3 796.8 572.5 796.7 576.7 796.8C580.9 796.9 585.0 797.0 589.2 797.4C593.4 797.7 597.6 798.2 601.8 798.9C606.0 799.6 610.2 800.5 614.4 801.5C618.6 802.5 622.8 803.7 626.9 804.9C631.1 806.1 635.3 807.4 639.5 808.6C643.7 809.9 647.9 811.1 652.1 812.2C656.3 813.3 660.5 814.4 664.7 815.4C668.8 816.3 673.0 817.3 677.2 818.0C681.4 818.7 685.6 819.3 689.8 819.7C694.0 820.1 698.2 820.4 702.4 820.4C706.6 820.5 710.7 820.4 714.9 820.1C719.1 819.7 723.3 819.1 727.5 818.6C731.7 818.1 735.9 817.6 740.1 817.1C744.3 816.7 748.4 816.2 752.6 815.9C756.8 815.7 761.0 815.5 765.2 815.4C769.4 815.4 773.6 815.5 777.8 815.6C782.0 815.7 786.2 816.0 790.3 816.3C794.5 816.6 798.7 817.1 802.9 817.5C807.1 818.0 811.3 818.5 815.5 818.9C819.7 819.4 823.9 820.0 828.1 820.4C832.2 820.9 836.4 821.3 840.6 821.7C844.8 822.1 849.0 822.5 853.2 822.8C857.4 823.1 861.6 823.4 865.8 823.5C870.0 823.7 874.1 823.8 878.3 823.8C882.5 823.8 886.7 823.6 890.9 823.3C895.1 823.0 899.3 822.5 903.5 822.0C907.7 821.4 911.9 820.6 916.0 819.8C920.2 818.9 924.4 818.0 928.6 817.0C932.8 816.1 937.0 815.0 941.2 814.0C945.4 813.1 949.6 812.0 953.8 811.2C957.9 810.3 962.1 809.5 966.3 808.8C970.5 808.1 974.7 807.5 978.9 807.1C983.1 806.7 987.3 806.5 991.5 806.5C995.6 806.5 999.8 806.6 1004.0 807.0C1008.2 807.3 1012.4 808.0 1016.6 808.7C1020.8 809.3 1025.0 810.2 1029.2 810.9C1033.4 811.6 1037.5 812.4 1041.7 813.0C1045.9 813.6 1050.1 814.2 1054.3 814.6C1058.5 815.0 1062.7 815.4 1066.9 815.6C1071.1 815.9 1075.3 816.0 1079.4 816.1C1083.6 816.2 1087.8 816.2 1092.0 816.2C1096.2 816.1 1100.4 816.0 1104.6 815.8C1108.8 815.6 1113.0 815.3 1117.2 815.0C1121.3 814.7 1125.5 814.3 1129.7 813.9C1133.9 813.6 1138.1 813.1 1142.3 812.7C1146.5 812.2 1150.7 811.7 1154.9 811.2C1159.1 810.7 1163.2 810.2 1167.4 809.6C1171.6 809.1 1177.9 808.3 1180.0 808.0L1180 856.3L275 856.3Z" fill="url(#gb)"/>
<path d="M275.0 788.6C277.1 788.6 283.4 788.5 287.6 788.4C291.8 788.4 295.9 788.3 300.1 788.3C304.3 788.2 308.5 788.2 312.7 788.2C316.9 788.1 321.1 788.1 325.3 788.2C329.5 788.2 333.7 788.3 337.8 788.5C342.0 788.6 346.2 788.7 350.4 788.9C354.6 789.1 358.8 789.4 363.0 789.7C367.2 790.0 371.4 790.3 375.6 790.7C379.7 791.1 383.9 791.6 388.1 792.0C392.3 792.5 396.5 793.0 400.7 793.6C404.9 794.1 409.1 794.7 413.3 795.3C417.5 795.8 421.6 796.4 425.8 796.9C430.0 797.5 434.2 798.0 438.4 798.5C442.6 799.0 446.8 799.4 451.0 799.7C455.2 800.1 459.4 800.4 463.5 800.6C467.7 800.8 471.9 800.9 476.1 801.0C480.3 801.0 484.5 801.0 488.7 800.9C492.9 800.8 497.1 800.6 501.3 800.4C505.4 800.1 509.6 799.8 513.8 799.5C518.0 799.2 522.2 798.9 526.4 798.6C530.6 798.3 534.8 798.0 539.0 797.7C543.1 797.5 547.3 797.3 551.5 797.1C555.7 797.0 559.9 796.9 564.1 796.8C568.3 796.8 572.5 796.7 576.7 796.8C580.9 796.9 585.0 797.0 589.2 797.4C593.4 797.7 597.6 798.2 601.8 798.9C606.0 799.6 610.2 800.5 614.4 801.5C618.6 802.5 622.8 803.7 626.9 804.9C631.1 806.1 635.3 807.4 639.5 808.6C643.7 809.9 647.9 811.1 652.1 812.2C656.3 813.3 660.5 814.4 664.7 815.4C668.8 816.3 673.0 817.3 677.2 818.0C681.4 818.7 685.6 819.3 689.8 819.7C694.0 820.1 698.2 820.4 702.4 820.4C706.6 820.5 710.7 820.4 714.9 820.1C719.1 819.7 723.3 819.1 727.5 818.6C731.7 818.1 735.9 817.6 740.1 817.1C744.3 816.7 748.4 816.2 752.6 815.9C756.8 815.7 761.0 815.5 765.2 815.4C769.4 815.4 773.6 815.5 777.8 815.6C782.0 815.7 786.2 816.0 790.3 816.3C794.5 816.6 798.7 817.1 802.9 817.5C807.1 818.0 811.3 818.5 815.5 818.9C819.7 819.4 823.9 820.0 828.1 820.4C832.2 820.9 836.4 821.3 840.6 821.7C844.8 822.1 849.0 822.5 853.2 822.8C857.4 823.1 861.6 823.4 865.8 823.5C870.0 823.7 874.1 823.8 878.3 823.8C882.5 823.8 886.7 823.6 890.9 823.3C895.1 823.0 899.3 822.5 903.5 822.0C907.7 821.4 911.9 820.6 916.0 819.8C920.2 818.9 924.4 818.0 928.6 817.0C932.8 816.1 937.0 815.0 941.2 814.0C945.4 813.1 949.6 812.0 953.8 811.2C957.9 810.3 962.1 809.5 966.3 808.8C970.5 808.1 974.7 807.5 978.9 807.1C983.1 806.7 987.3 806.5 991.5 806.5C995.6 806.5 999.8 806.6 1004.0 807.0C1008.2 807.3 1012.4 808.0 1016.6 808.7C1020.8 809.3 1025.0 810.2 1029.2 810.9C1033.4 811.6 1037.5 812.4 1041.7 813.0C1045.9 813.6 1050.1 814.2 1054.3 814.6C1058.5 815.0 1062.7 815.4 1066.9 815.6C1071.1 815.9 1075.3 816.0 1079.4 816.1C1083.6 816.2 1087.8 816.2 1092.0 816.2C1096.2 816.1 1100.4 816.0 1104.6 815.8C1108.8 815.6 1113.0 815.3 1117.2 815.0C1121.3 814.7 1125.5 814.3 1129.7 813.9C1133.9 813.6 1138.1 813.1 1142.3 812.7C1146.5 812.2 1150.7 811.7 1154.9 811.2C1159.1 810.7 1163.2 810.2 1167.4 809.6C1171.6 809.1 1177.9 808.3 1180.0 808.0" fill="none" stroke="#3495d8" stroke-width="1.7" stroke-linejoin="round"/>
<g font-family="Liberation Sans, sans-serif" font-size="12.3" fill="#6e6e76"><text x="1184" y="582.6" text-anchor="start" textLength="23.3" lengthAdjust="spacing">чел.</text><text x="1184" y="622.5" text-anchor="start" textLength="39.4" lengthAdjust="spacing">12 500</text><text x="1184" y="670" text-anchor="start" textLength="40.3" lengthAdjust="spacing">10 000</text><text x="1184" y="717.5" text-anchor="start" textLength="33.2" lengthAdjust="spacing">7 500</text><text x="1184" y="765" text-anchor="start" textLength="34.8" lengthAdjust="spacing">5 000</text><text x="1184" y="813" text-anchor="start" textLength="34.1" lengthAdjust="spacing">2 500</text><text x="1184" y="854.2" text-anchor="start" textLength="7.1" lengthAdjust="spacing">0</text><text x="275.5" y="872.8" text-anchor="start" textLength="26.5" lengthAdjust="spacing">01.11</text><text x="425.6" y="872.8" text-anchor="middle" textLength="29" lengthAdjust="spacing">05.11</text><text x="576.6" y="872.8" text-anchor="middle" textLength="25.75" lengthAdjust="spacing">10.11</text><text x="727.5" y="872.8" text-anchor="middle" textLength="26" lengthAdjust="spacing">15.11</text><text x="877.8" y="872.8" text-anchor="middle" textLength="28" lengthAdjust="spacing">20.11</text><text x="1028.5" y="872.8" text-anchor="middle" textLength="28" lengthAdjust="spacing">25.11</text><text x="1178.2" y="872.8" text-anchor="end" textLength="27.5" lengthAdjust="spacing">30.11</text></g></svg>


</div></div>
<svg style="position:absolute;left:40px;top:54px;pointer-events:none" width="1264" height="858" viewBox="0 0 1264 858"><rect x="0.85" y="0.85" width="1262.3" height="856.3" rx="41.2" fill="none" stroke="#d9d9dc" stroke-width="1.7"/></svg>
</body>
</html>
